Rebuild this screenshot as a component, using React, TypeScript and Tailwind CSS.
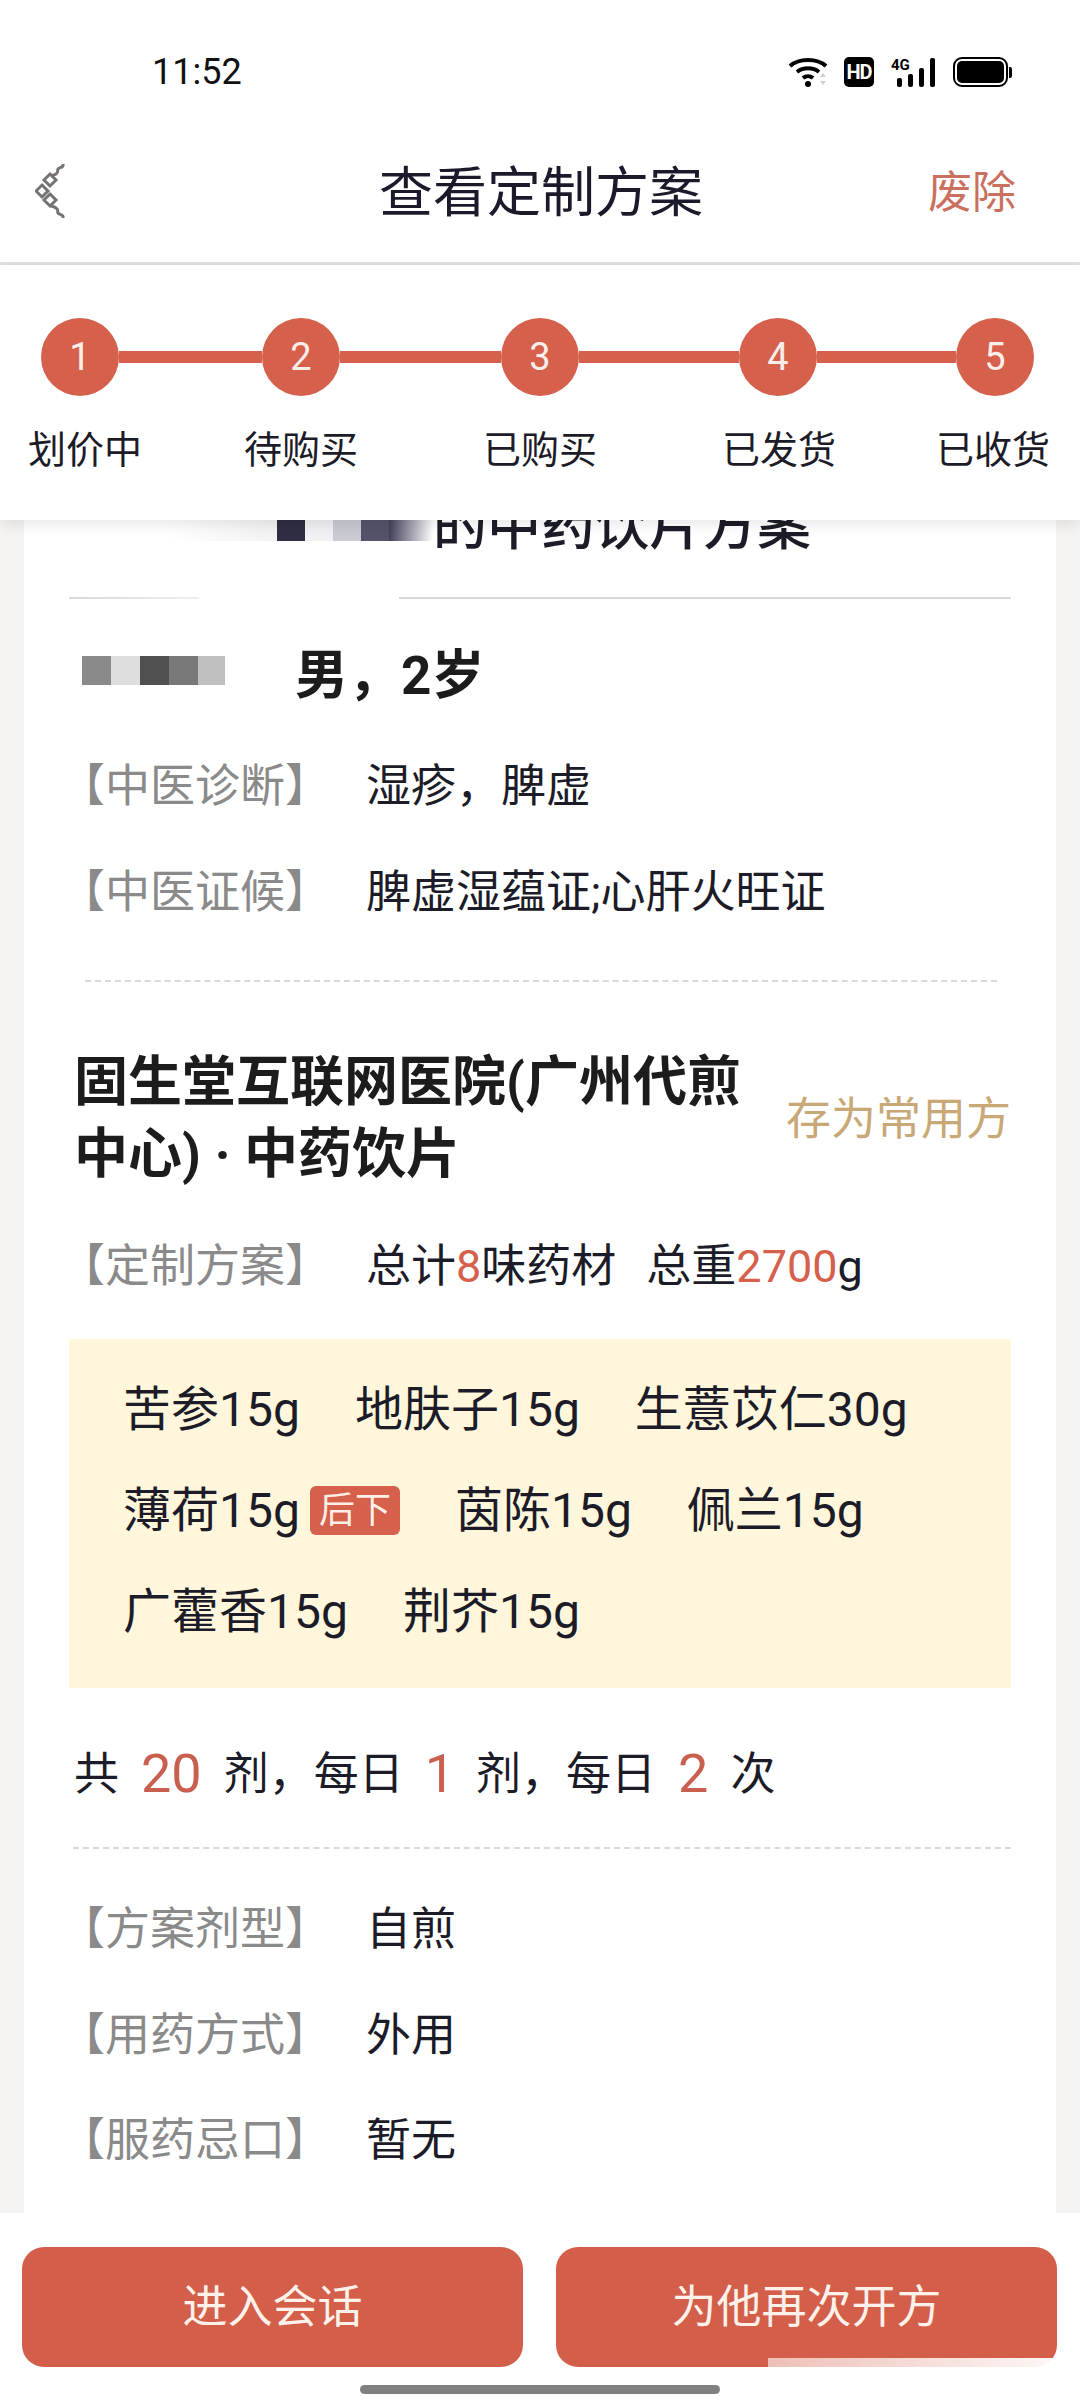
import React from 'react';

const FONT = 'font-["Roboto","Noto_Sans_CJK_SC",sans-serif]';

const steps = [
  { n: '1', label: '划价中', labelClass: 'ml-[28px]', line: 'w-[143px]' },
  { n: '2', label: '待购买', labelClass: 'ml-[102px]', line: 'w-[161px]' },
  { n: '3', label: '已购买', labelClass: 'ml-[125px]', line: 'w-[160px]' },
  { n: '4', label: '已发货', labelClass: 'ml-[125px]', line: 'w-[139px]' },
  { n: '5', label: '已收货', labelClass: 'ml-[100px]', line: '' },
];

const herbs = [
  { name: '苦参15g' },
  { name: '地肤子15g' },
  { name: '生薏苡仁30g' },
  { name: '薄荷15g', tag: '后下' },
  { name: '茵陈15g' },
  { name: '佩兰15g' },
  { name: '广藿香15g' },
  { name: '荆芥15g' },
];

const BackIcon = () => (
  <svg width="30" height="56" viewBox="0 0 30 56" fill="none" stroke="#777272" strokeWidth="3">
    <path d="M28 1c1 4-4 3-5 5s1 3-2 5-3 1-5 2" />
    <path d="M28 55c1-4-4-3-5-5s1-3-2-5-3-1-5-2" />
    <path d="M15 11l6 6-6 6-6-6z" />
    <path d="M6 21l6 6-6 6-6-6z" transform="translate(1 1)" />
    <path d="M15 31l6 6-6 6-6-6z" />
  </svg>
);

const StatusIcons = () => (
  <div className="flex items-center">
    <svg width="42" height="30" viewBox="0 0 42 30" fill="none">
      <path d="M2 9C11 1 29 1 38 9" stroke="#000" strokeWidth="4" />
      <path d="M9 15c6-5 16-5 22 0" stroke="#000" strokeWidth="4" />
      <path d="M15 21c3-2.500 7-2.500 10 0" stroke="#000" strokeWidth="4" />
      <circle cx="20" cy="27" r="3" fill="#000" />
      <path d="M32 20l3-4 3 4zM32 24l3 4 3-4z" fill="#cfcfcf" />
    </svg>
    <div className="ml-[14px] flex h-[30px] w-[30px] items-center justify-center rounded-[5px] bg-black text-[20px] leading-none font-bold text-white">
      <span className="font-['Roboto',sans-serif] tracking-[-1px]">HD</span>
    </div>
    <svg className="ml-[17px]" width="46" height="30" viewBox="0 0 46 30">
      <text x="0" y="13" fontSize="15" fontWeight="700" fontFamily="Roboto" fill="#000">4G</text>
      <rect x="6" y="21" width="5" height="9" rx="2" fill="#000" />
      <rect x="17" y="17" width="5" height="13" rx="2" fill="#000" />
      <rect x="28" y="11" width="5" height="19" rx="2" fill="#000" />
      <rect x="39" y="1" width="5" height="29" rx="2" fill="#000" />
    </svg>
    <div className="ml-[16px] flex items-center">
      <div className="h-[30px] w-[55px] rounded-[9px] border-[2px] border-black p-[2px]">
        <div className="h-full w-full rounded-[5px] bg-black" />
      </div>
      <div className="ml-[1px] h-[11px] w-[3px] rounded-r-[2px] bg-black" />
    </div>
  </div>
);

const InfoRow = ({ label, value, className }: { label: string; value: React.ReactNode; className: string }) => (
  <div className={`flex items-center ${className}`}>
    <span className="-ml-[9px] w-[306px] shrink-0 text-[45px] leading-none text-[#8a8a8a]">{label}</span>
    <span className="text-[45px] leading-none text-[#1c1c28]">{value}</span>
  </div>
);

export default function App() {
  return (
    <div className={`flex h-[2400px] w-[1080px] flex-col overflow-hidden bg-white ${FONT}`}>
      {/* Status bar */}
      <div className="flex h-[120px] items-start justify-between pt-[51px] pr-[68px] pl-[152px]">
        <span className="text-[36px] leading-[42px] text-[#111]">11:52</span>
        <div className="mt-[6px]">
          <StatusIcons />
        </div>
      </div>

      {/* Nav */}
      <div className="flex h-[145px] items-center border-b-[3px] border-[#e2e2e2] pr-[64px] pl-[35px]">
        <BackIcon />
        <span className="mt-[6px] ml-[314px] text-[54px] leading-none text-[#1a1a2a]">查看定制方案</span>
        <span className="mt-[4px] ml-auto text-[44px] leading-none text-[#c9705f]">废除</span>
      </div>

      {/* Steps */}
      <div className="relative z-10 h-[255px] bg-white shadow-[0_4px_14px_rgba(0,0,0,0.10)]">
        <div className="flex items-center pt-[53px] pl-[41px]">
          {steps.map((s) => (
            <React.Fragment key={s.n}>
              <div className="flex h-[78px] w-[78px] shrink-0 items-center justify-center rounded-full bg-[#d5604c] text-[38px] leading-none text-[#fbeee9]">
                {s.n}
              </div>
              {s.line && <div className={`h-[12px] bg-[#d5604c] ${s.line}`} />}
            </React.Fragment>
          ))}
        </div>
        <div className="flex pt-[31px]">
          {steps.map((s) => (
            <span key={s.n} className={`w-[114px] shrink-0 text-[38px] leading-[46px] text-[#1c1c28] ${s.labelClass}`}>
              {s.label}
            </span>
          ))}
        </div>
      </div>

      {/* Body */}
      <div className="flex-1 overflow-hidden bg-[#f5f4f2] px-[24px]">
        <div className="flow-root h-full bg-white px-[45px]">
          {/* Title, scrolled mostly under the steps panel */}
          <div className="relative -mt-[28px] flex h-[69px] items-center pl-[364px] text-[54px] leading-none font-medium text-[#1c1c28]">
            的中药饮片方案
            <div className="absolute top-[28px] left-[100px] flex h-[21px]">
              <div className="h-full w-[100px] bg-gradient-to-r from-white/0 to-[#f3f3f3]" />
              <div className="h-full w-[8px] bg-[#f3f3f3]" />
              <div className="h-full w-[28px] bg-[#2f2e42]" />
              <div className="h-full w-[28px] bg-[#f1f1f3]" />
              <div className="h-full w-[28px] bg-[#c9cad2]" />
              <div className="h-full w-[28px] bg-[#55536a]" />
              <div className="h-full w-[44px] bg-gradient-to-r from-[#42405a] to-white/0" />
            </div>
          </div>

          <div className="mt-[36px] flex h-[2px] w-[942px]">
            <div className="w-[130px] bg-gradient-to-r from-[#d8d8dc] to-[#eeeeee]" />
            <div className="w-[200px] bg-white" />
            <div className="flex-1 bg-[#d8d8dc]" />
          </div>

          {/* Patient */}
          <div className="mt-[47px] flex h-[60px] items-center">
            <div className="ml-[13px] flex h-[29px] w-[143px] -translate-y-[6px]">
              <div className="w-[29px] bg-[#8a8a8a]" />
              <div className="w-[29px] bg-[#dedede]" />
              <div className="w-[29px] bg-[#505050]" />
              <div className="w-[29px] bg-[#787878]" />
              <div className="w-[27px] bg-[#c0c0c0]" />
            </div>
            <span className="ml-[70px] text-[53px] leading-none font-bold text-[#1c1c1c]">男，2岁</span>
          </div>
          <InfoRow className="mt-[50px] h-[60px]" label="【中医诊断】" value="湿疹，脾虚" />
          <InfoRow className="mt-[46px] h-[60px]" label="【中医证候】" value="脾虚湿蕴证;心肝火旺证" />

          <div className="mt-[58px] ml-[16px] w-[912px] border-t-[2px] border-dashed border-[#d9d9d9]" />

          {/* Prescription */}
          <div className="mt-[65px] flex items-center">
            <div className="ml-[5px] w-[690px] text-[54px] leading-[72px] font-bold text-[#1c1c1c]">
              固生堂互联网医院(广州代煎中心) · 中药饮片
            </div>
            <span className="ml-[26px] text-[45px] leading-none whitespace-nowrap text-[#c9a877]">存为常用方</span>
          </div>
          <InfoRow
            className="mt-[45px] h-[60px]"
            label="【定制方案】"
            value={
              <>
                总计<span className="text-[#d5604c]">8</span>味药材
                <span className="ml-[30px]">
                  总重<span className="text-[#d5604c]">2700</span>g
                </span>
              </>
            }
          />

          {/* Herb list */}
          <div className="mt-[43px] flex h-[349px] flex-wrap content-start gap-x-[55px] bg-[#fff6dc] px-[54px] pt-[20px]">
            {herbs.map((h) => (
              <div key={h.name} className="flex h-[101px] items-center text-[48px] leading-none text-[#1c1c28]">
                {h.name}
                {h.tag && (
                  <span className="ml-[10px] flex h-[49px] w-[90px] items-center justify-center rounded-[6px] bg-[#d5604c] text-[36px] leading-none text-[#fdeee6]">
                    {h.tag}
                  </span>
                )}
              </div>
            ))}
          </div>

          {/* Dosage */}
          <div className="mt-[56px] ml-[5px] flex h-[60px] items-center text-[45px] leading-none text-[#1c1c28]">
            共<span className="mx-[22px] text-[54px] text-[#c9604f]">20</span>剂，每日
            <span className="mx-[21px] text-[54px] text-[#c9604f]">1</span>剂，每日
            <span className="mx-[22px] text-[54px] text-[#c9604f]">2</span>次
          </div>
          <div className="mt-[43px] ml-[4px] w-[938px] border-t-[2px] border-dashed border-[#d9d9d9]" />
          <InfoRow className="mt-[50px] h-[60px]" label="【方案剂型】" value="自煎" />
          <InfoRow className="mt-[46px] h-[60px]" label="【用药方式】" value="外用" />
          <InfoRow className="mt-[45px] h-[60px]" label="【服药忌口】" value="暂无" />
        </div>
      </div>

      {/* Footer */}
      <div className="relative h-[187px] bg-white px-[22px] pt-[34px]">
        <div className="flex gap-[33px]">
          <button className="h-[120px] w-[501px] rounded-[22px] bg-[#d35f4a] text-[45px] leading-none text-[#fdf1ea]">进入会话</button>
          <button className="h-[120px] w-[501px] rounded-[22px] bg-[#d35f4a] text-[45px] leading-none text-[#fdf1ea]">为他再次开方</button>
        </div>
        <div className="mx-auto mt-[18px] h-[9px] w-[360px] rounded-full bg-[#808080]" />
        {/* Watermark smear over the corner */}
        <div className="absolute top-[145px] right-[26px] h-[33px] w-[286px] bg-gradient-to-r from-white/60 to-white/95" />
      </div>
    </div>
  );
}
